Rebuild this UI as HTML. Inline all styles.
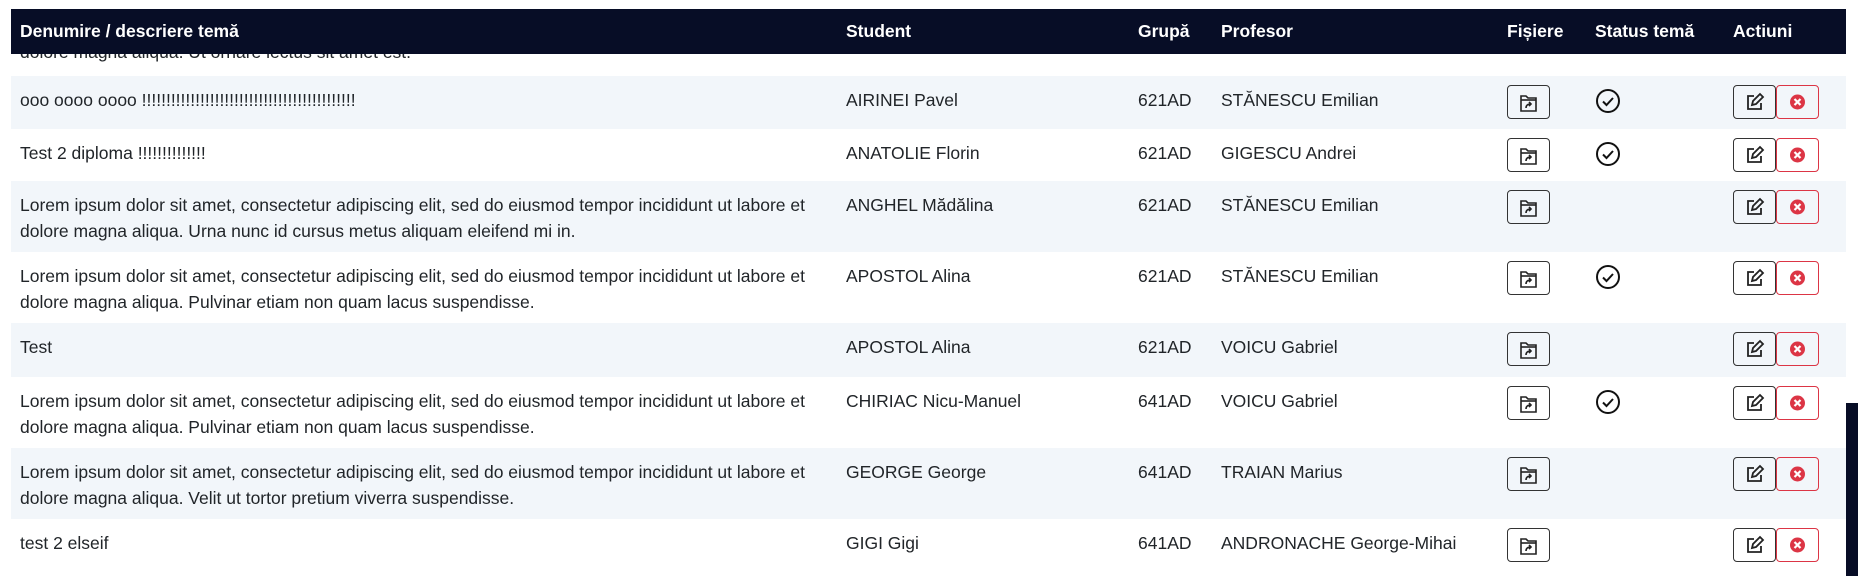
<!DOCTYPE html>
<html><head><meta charset="utf-8"><style>
*{box-sizing:border-box;margin:0;padding:0}
body{width:1858px;height:576px;overflow:hidden;background:#fff;font-family:"Liberation Sans",sans-serif;color:#212529;font-size:17.5px;position:relative}
.hdr{position:absolute;left:11px;top:9px;width:1835px;height:45px;background:#070d26;color:#fff;font-weight:bold;font-size:17.5px;z-index:2}
.hdr span{position:absolute;top:12px;white-space:nowrap}
.row{position:absolute;left:11px;width:1835px}
.s{background:#f2f6fa}
.t{position:absolute;line-height:26px;white-space:nowrap}
.fb{position:absolute;left:1496px;width:43px;height:34px;border:1.3px solid #333;border-radius:4px;background:#fff0}
.eb{position:absolute;left:1722px;width:43px;height:34px;border:1.3px solid #333;border-radius:4px}
.db{position:absolute;left:1765px;width:43px;height:34px;border:1.3px solid #dc3545;border-radius:4px}
.ck{position:absolute;left:1584px}
svg{display:block}
.sb{position:absolute;left:1846px;top:403px;width:12px;height:173px;background:#070d26}
</style></head><body>
<div class="hdr">
<span style="left:9px">Denumire / descriere temă</span>
<span style="left:835px">Student</span>
<span style="left:1127px">Grupă</span>
<span style="left:1210px">Profesor</span>
<span style="left:1496px">Fișiere</span>
<span style="left:1584px">Status temă</span>
<span style="left:1722px">Actiuni</span>
</div>
<div class="t" style="left:20px;top:39px">dolore magna aliqua. Ut ornare lectus sit amet est.</div>

<div id="rows"></div>
<div class="sb"></div>
<script>
const F='<svg width="41" height="32" viewBox="0 0 41 32"><g fill="none" stroke="#222" stroke-width="1.6"><path d="M13 10h5l2 2h8v13H13z"/><path d="M13 14h15"/><path d="M18 22c0-3 2-4 5-4m-2-2l2 2-2 2"/></g></svg>';
const E='<svg width="41" height="32" viewBox="0 0 41 32"><g fill="none" stroke="#222" stroke-width="1.8"><path d="M20 10h-6v13h13v-6"/><path d="M18 19l1-4 7-7 3 3-7 7z"/></g></svg>';
const D='<svg width="41" height="32" viewBox="0 0 41 32"><circle cx="20.5" cy="16" r="7.5" fill="#dc3545"/><path d="M17.5 13l6 6m0-6l-6 6" stroke="#fff" stroke-width="2.2"/></svg>';
const C='<svg width="26" height="26" viewBox="0 0 26 26"><circle cx="13" cy="13" r="11" fill="none" stroke="#111" stroke-width="2"/><path d="M8 13.5l3.5 3.5 6.5-7" fill="none" stroke="#111" stroke-width="2"/></svg>';
const L='Lorem ipsum dolor sit amet, consectetur adipiscing elit, sed do eiusmod tempor incididunt ut labore et<br>';
const rows=[
[76,53,1,'ooo oooo oooo !!!!!!!!!!!!!!!!!!!!!!!!!!!!!!!!!!!!!!!!!!!!','AIRINEI Pavel','621AD','STĂNESCU Emilian',1],
[129,52,0,'Test 2 diploma !!!!!!!!!!!!!!','ANATOLIE Florin','621AD','GIGESCU Andrei',1],
[181,71,1,L+'dolore magna aliqua. Urna nunc id cursus metus aliquam eleifend mi in.','ANGHEL Mădălina','621AD','STĂNESCU Emilian',0],
[252,71,0,L+'dolore magna aliqua. Pulvinar etiam non quam lacus suspendisse.','APOSTOL Alina','621AD','STĂNESCU Emilian',1],
[323,54,1,'Test','APOSTOL Alina','621AD','VOICU Gabriel',0],
[377,71,0,L+'dolore magna aliqua. Pulvinar etiam non quam lacus suspendisse.','CHIRIAC Nicu-Manuel','641AD','VOICU Gabriel',1],
[448,71,1,L+'dolore magna aliqua. Velit ut tortor pretium viverra suspendisse.','GEORGE George','641AD','TRAIAN Marius',0],
[519,53,0,'test 2 elseif','GIGI Gigi','641AD','ANDRONACHE George-Mihai',0]];
let h='';
for(const r of rows){
h+=`<div class="row${r[2]?' s':''}" style="top:${r[0]}px;height:${r[1]}px">
<div class="t" style="left:9px;top:11px">${r[3]}</div>
<div class="t" style="left:835px;top:11px">${r[4]}</div>
<div class="t" style="left:1127px;top:11px">${r[5]}</div>
<div class="t" style="left:1210px;top:11px">${r[6]}</div>
<div class="fb" style="top:9px">${F}</div>
${r[7]?`<div class="ck" style="top:12px">${C}</div>`:''}
<div class="eb" style="top:9px">${E}</div>
<div class="db" style="top:9px">${D}</div></div>`;}
document.getElementById('rows').outerHTML=h;
</script>
</body></html>
